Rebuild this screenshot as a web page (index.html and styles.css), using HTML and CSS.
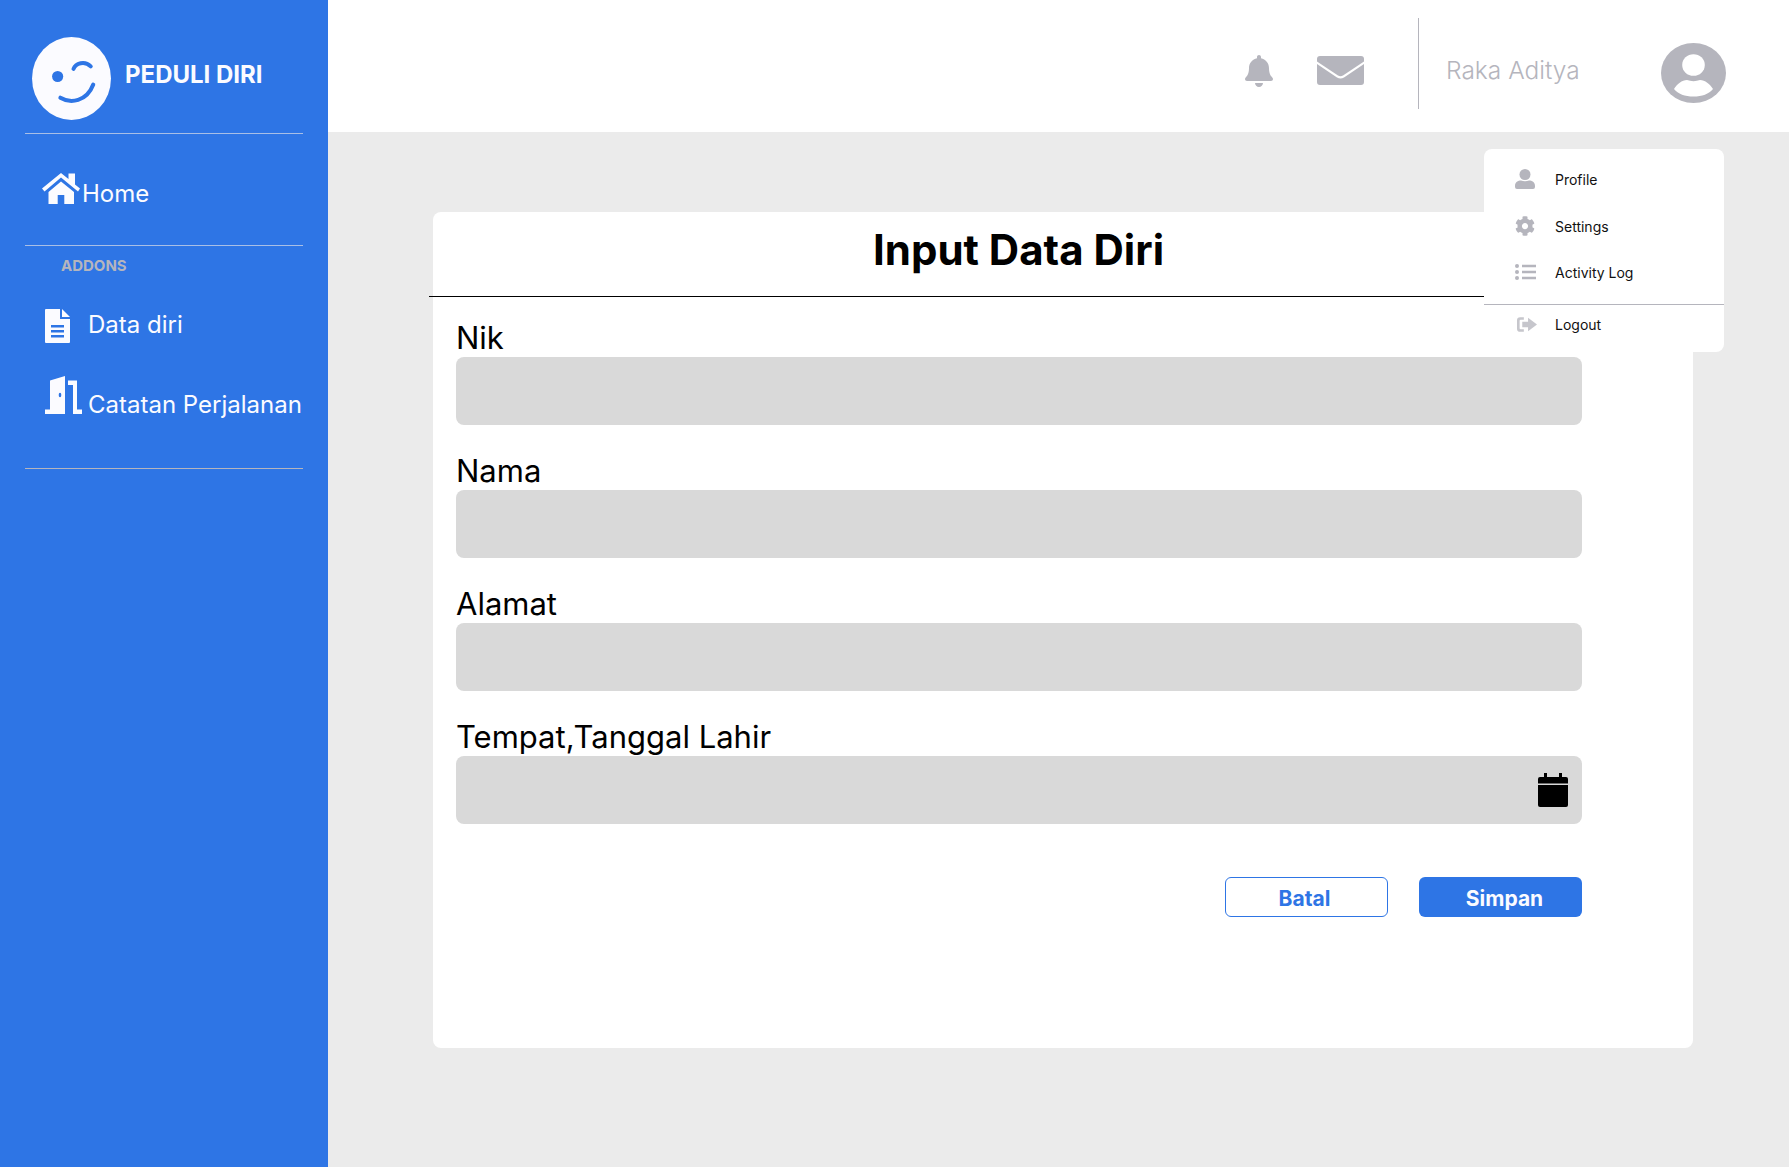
FILE: index.html
```html
<!DOCTYPE html>
<html lang="en">
<head>
    <meta charset="UTF-8">
    <title>Peduli Diri - Input Data Diri</title>
    <link rel="stylesheet" href="styles.css">
</head>
<body>
    <aside class="sidebar">
        <div class="brand">
            <svg class="brand-logo" viewBox="0 0 78 82">
                <ellipse cx="39" cy="41" rx="39" ry="41" fill="#fbfbff"/>
                <circle cx="25.300" cy="39" r="5.500" fill="#2e75e5"/>
                <path d="M41 31.500C43 26 52 23 58 29" fill="none" stroke="#2e75e5" stroke-width="4" stroke-linecap="round"/>
                <path d="M28 60C38 66 54 64 60.500 47" fill="none" stroke="#2e75e5" stroke-width="4" stroke-linecap="round"/>
            </svg>
            <span class="brand-name">PEDULI DIRI</span>
        </div>
        <hr class="side-line">
        <a class="home-link">
            <svg class="icon-home" viewBox="0 0 38 32">
                <path d="M0 16.500 19 1l7.500 6V1.500H33v11l5 4-2 3L19 5.500 2.500 19.500z" fill="#fbfbff"/>
                <path d="M6.500 20 19 9.500 32 20v12h-9.700v-9h-6.600v9H6.500z" fill="#fbfbff"/>
            </svg>
            <span>Home</span>
        </a>
        <hr class="side-line">
        <div class="side-title">ADDONS</div>
        <a class="side-link link-data">
            <svg class="icon-file" viewBox="0 0 25 34">
                <path d="M1 0h14v10h10v23a1 1 0 0 1-1 1H1a1 1 0 0 1-1-1V1a1 1 0 0 1 1-1z" fill="#fbfbff"/>
                <path d="M17 0l8 8h-8z" fill="#fbfbff"/>
                <path d="M6 16h13v2.500H6zM6 21h13v2.500H6zM6 26h13v2.500H6z" fill="#2e75e5"/>
            </svg>
            <span>Data diri</span>
        </a>
        <a class="side-link link-trip">
            <svg class="icon-door" viewBox="0 0 37 38">
                <path d="M0 38v-4.500h5V4.500L20 0v38z" fill="#fbfbff"/>
                <path d="M23 4.500h9v29h5V38h-9V9h-5z" fill="#fbfbff"/>
                <ellipse cx="15" cy="19" rx="1.300" ry="2.200" fill="#2e75e5"/>
            </svg>
            <span>Catatan Perjalanan</span>
        </a>
        <hr class="side-line line-end">
    </aside>

    <div class="main">
        <header class="topbar">
            <svg class="icon-bell" viewBox="0 0 448 512"><path d="M224 512c35.320 0 63.970-28.650 63.970-64H160.030c0 35.350 28.650 64 63.970 64zm215.390-149.710c-19.320-20.760-55.470-51.990-55.470-154.290 0-77.700-54.480-139.900-127.940-155.160V32c0-17.670-14.320-32-31.980-32s-31.980 14.330-31.980 32v20.840C118.560 68.100 64.080 130.300 64.080 208c0 102.300-36.150 133.530-55.470 154.290-6 6.450-8.660 14.160-8.610 21.710.11 16.400 12.980 32 32.100 32h383.800c19.120 0 32-15.600 32.100-32 .05-7.550-2.610-15.270-8.610-21.710z"/></svg>
            <svg class="icon-mail" viewBox="0 0 47 29">
                <path d="M3 0h41a3 3 0 0 1 3 3v2.500L26 19.500a5 5 0 0 1-5 0L0 5.500V3a3 3 0 0 1 3-3z"/>
                <path d="M0 8 20 21.500a6.500 6.500 0 0 0 7 0L47 8v18a3 3 0 0 1-3 3H3a3 3 0 0 1-3-3z"/>
            </svg>
            <div class="top-divider"></div>
            <span class="user-name">Raka Aditya</span>
            <svg class="avatar" viewBox="0 0 65 60">
                <ellipse cx="32.500" cy="30" rx="32.500" ry="30" fill="#b5b5bd"/>
                <ellipse cx="32.500" cy="22" rx="11.300" ry="10.800" fill="#fff"/>
                <path d="M13 46c3-5 8-9 13-9 4 1.500 9 1.500 13 0 5 0 10 4 13 9-4 5-11 7.500-19.500 7.500S17 51 13 46z" fill="#fff"/>
            </svg>
        </header>

        <main class="content">
            <form class="card">
                <h1 class="card-title">Input Data Diri</h1>
                <hr class="card-line">
                <div class="form-body">
                    <label class="form-label">Nik</label>
                    <div class="field"><input type="text"></div>
                    <label class="form-label">Nama</label>
                    <div class="field"><input type="text"></div>
                    <label class="form-label">Alamat</label>
                    <div class="field"><input type="text"></div>
                    <label class="form-label">Tempat,Tanggal Lahir</label>
                    <div class="field">
                        <input type="text">
                        <svg class="icon-calendar" viewBox="0 0 30 34">
                            <path d="M6 0h3v4h12V0h3v4h4a2 2 0 0 1 2 2v4.500H0V6a2 2 0 0 1 2-2h4z"/>
                            <path d="M0 12h30v20a2 2 0 0 1-2 2H2a2 2 0 0 1-2-2z"/>
                        </svg>
                    </div>
                    <div class="form-actions">
                        <button type="button" class="btn btn-outline">Batal</button>
                        <button type="button" class="btn btn-primary">Simpan</button>
                    </div>
                </div>
            </form>

            <div class="user-menu">
                <a class="menu-item item-profile">
                    <svg class="menu-icon" viewBox="0 0 20 20">
                        <circle cx="10" cy="5.500" r="5.500"/>
                        <path d="M0 17c0-4 3-5.500 6-5.500 2.500 1 5.500 1 8 0 3 0 6 1.500 6 5.500v1a2 2 0 0 1-2 2H2a2 2 0 0 1-2-2z"/>
                    </svg>
                    <span>Profile</span>
                </a>
                <a class="menu-item item-settings">
                    <svg class="menu-icon" viewBox="0 0 512 512"><path d="M487.400 315.700l-42.600-24.600c4.300-23.200 4.300-47 0-70.200l42.600-24.600c4.900-2.800 7.100-8.600 5.500-14-11.100-35.600-30-67.800-54.700-94.600-3.800-4.100-10-5.100-14.800-2.300L380.800 110c-17.900-15.400-38.500-27.300-60.800-35.100V25.800c0-5.600-3.900-10.500-9.400-11.700-36.700-8.200-74.300-7.800-109.200 0-5.500 1.200-9.400 6.100-9.400 11.700V75c-22.200 7.900-42.800 19.800-60.800 35.100L88.700 85.500c-4.900-2.800-11-1.900-14.800 2.300-24.700 26.700-43.600 58.900-54.700 94.600-1.700 5.400.6 11.200 5.500 14L67.300 221c-4.300 23.200-4.300 47 0 70.200l-42.600 24.600c-4.900 2.800-7.100 8.600-5.500 14 11.100 35.600 30 67.800 54.700 94.600 3.800 4.100 10 5.100 14.800 2.300l42.600-24.600c17.900 15.400 38.500 27.300 60.800 35.100v49.200c0 5.600 3.900 10.500 9.400 11.700 36.700 8.200 74.300 7.800 109.200 0 5.500-1.200 9.400-6.100 9.400-11.700v-49.200c22.200-7.900 42.800-19.800 60.800-35.100l42.600 24.600c4.900 2.800 11 1.900 14.800-2.300 24.700-26.700 43.600-58.900 54.700-94.600 1.500-5.500-.7-11.300-5.600-14.100zM256 336c-44.100 0-80-35.900-80-80s35.900-80 80-80 80 35.900 80 80-35.900 80-80 80z"/></svg>
                    <span>Settings</span>
                </a>
                <a class="menu-item item-activity">
                    <svg class="menu-icon" viewBox="0 0 21 16">
                        <circle cx="2" cy="2" r="2"/><circle cx="2" cy="8" r="2"/><circle cx="2" cy="14" r="2"/>
                        <path d="M7 .800h14v2.400H7zM7 6.800h14v2.400H7zM7 12.800h14v2.400H7z"/>
                    </svg>
                    <span>Activity Log</span>
                </a>
                <hr class="menu-line">
                <a class="menu-item item-logout">
                    <svg class="menu-icon icon-logout" viewBox="0 0 19 14">
                        <path d="M6.500 0H3a3 3 0 0 0-3 3v8a3 3 0 0 0 3 3h3.500v-2.500H3.500a1 1 0 0 1-1-1v-7a1 1 0 0 1 1-1h3z"/>
                        <path d="M5 4.500h5.500V.5L19 7l-8.500 6.500v-4H5z"/>
                    </svg>
                    <span>Logout</span>
                </a>
            </div>
        </main>
    </div>
</body>
</html>
```

FILE: styles.css
```css
* {
    box-sizing: border-box;
}
html, body {
    height: 100%;
}
body {
    margin: 0;
    display: flex;
    min-height: 1167px;
    overflow: hidden;
    font-family: Inter, "Liberation Sans", sans-serif;
    background-color: #ebebeb;
    color: #000;
}
svg {
    display: block;
    flex-shrink: 0;
}

/* sidebar */
.sidebar {
    width: 328px;
    flex-shrink: 0;
    background-color: #2e75e5;
    color: #fbfbff;
}
.brand {
    display: flex;
    align-items: center;
    height: 133px;
    padding: 24px 0 0 32px;
}
.brand-logo {
    width: 79px;
    height: 83px;
}
.brand-name {
    margin: -8px 0 0 14px;
    font-size: 24px;
    font-weight: 700;
}
.side-line {
    height: 1px;
    margin: 0 25px;
    border: none;
    background-color: #a9bfe6;
}
.line-end {
    margin-top: 54px;
    background-color: #b5b5bd;
}
.home-link {
    display: flex;
    align-items: flex-start;
    height: 111px;
    padding: 38px 0 0 42px;
    font-size: 24px;
}
.home-link span {
    margin: 7px 0 0 2px;
}
.icon-home {
    width: 38px;
    height: 32px;
}
.side-title {
    height: 34px;
    padding: 10px 0 0 61px;
    font-size: 15px;
    font-weight: 700;
    color: #b5b5bd;
}
.side-link {
    display: flex;
    padding-left: 45px;
    font-size: 24px;
    white-space: nowrap;
}
.link-data {
    align-items: center;
    height: 34px;
    margin-top: 29px;
}
.link-data span {
    margin: -3px 0 0 18px;
}
.link-trip {
    align-items: flex-end;
    height: 38px;
    margin-top: 33px;
}
.link-trip span {
    margin: 0 0 -5px 6px;
}
.icon-file {
    width: 25px;
    height: 34px;
}
.icon-door {
    width: 37px;
    height: 38px;
}

/* top bar */
.main {
    flex: 1;
    display: flex;
    flex-direction: column;
}
.topbar {
    display: flex;
    align-items: center;
    height: 132px;
    padding-left: 916px;
    background-color: #fff;
    color: #b5b5bd;
}
.topbar svg {
    fill: #b5b5bd;
}
.icon-bell {
    width: 30px;
    height: 32px;
    margin-top: 10px;
}
.icon-mail {
    width: 47px;
    height: 29px;
    margin: 8px 0 0 43px;
}
.top-divider {
    width: 1px;
    height: 91px;
    margin: 0 0 5px 54px;
    background-color: #b5b5bd;
}
.user-name {
    width: 215px;
    margin: 7px 0 0 27px;
    font-size: 24.500px;
    font-weight: 300;
    white-space: nowrap;
}
.avatar {
    width: 65px;
    height: 60px;
    margin-top: 14px;
}

/* form card */
.content {
    position: relative;
    flex: 1;
    padding: 80px 0 0 105px;
}
.card {
    width: 1260px;
    height: 836px;
    border-radius: 8px;
    background-color: #fff;
}
.card-title {
    height: 84px;
    margin: 0;
    padding: 14px 89px 0 0;
    font-size: 42px;
    font-weight: 700;
    line-height: 48px;
    text-align: center;
}
.card-line {
    height: 1px;
    margin: 0 0 0 -4px;
    border: none;
    background-color: #000;
}
.form-body {
    padding: 24px 111px 0 23px;
}
.form-label {
    display: block;
    height: 36px;
    font-size: 31px;
    line-height: 34px;
}
.field {
    position: relative;
    margin-bottom: 29px;
}
.field input {
    display: block;
    width: 100%;
    height: 68px;
    border: none;
    border-radius: 8px;
    background-color: #d9d9d9;
}
.icon-calendar {
    position: absolute;
    top: 17px;
    right: 14px;
    width: 30px;
    height: 34px;
}
.form-actions {
    display: flex;
    justify-content: flex-end;
    gap: 31px;
    margin-top: 53px;
}
.btn {
    width: 163px;
    height: 40px;
    border-radius: 6px;
    font-family: inherit;
    font-size: 21px;
    font-weight: 700;
    cursor: pointer;
}
.btn-outline {
    padding: 2px 4px 0 0;
    border: 1px solid #2e75e5;
    background-color: #fff;
    color: #2e75e5;
}
.btn-primary {
    padding: 2px 0 0 8px;
    border: none;
    background-color: #2e75e5;
    color: #fbfbff;
}

/* dropdown */
.user-menu {
    position: absolute;
    top: 17px;
    right: 65px;
    width: 240px;
    height: 203px;
    border-radius: 8px;
    background-color: #fff;
}
.menu-item {
    display: flex;
    align-items: center;
    height: 30px;
    padding-left: 31px;
    font-size: 14px;
    color: #111;
}
.menu-item span {
    margin-left: 20px;
}
.menu-icon {
    width: 20px;
    height: 20px;
    fill: #b5b5bd;
}
.item-profile {
    margin-top: 15px;
}
.item-settings {
    margin-top: 17px;
}
.item-activity {
    margin-top: 16px;
}
.item-activity .menu-icon {
    width: 21px;
    height: 16px;
}
.item-activity span {
    margin-left: 19px;
}
.menu-line {
    height: 1px;
    margin: 17px 0 0;
    border: none;
    background-color: #b5b5bd;
}
.item-logout {
    margin-top: 4px;
}
.icon-logout {
    height: 15px;
    margin-left: 2px;
    fill: #c6c6cc;
}
.item-logout span {
    margin-left: 18px;
}
```
